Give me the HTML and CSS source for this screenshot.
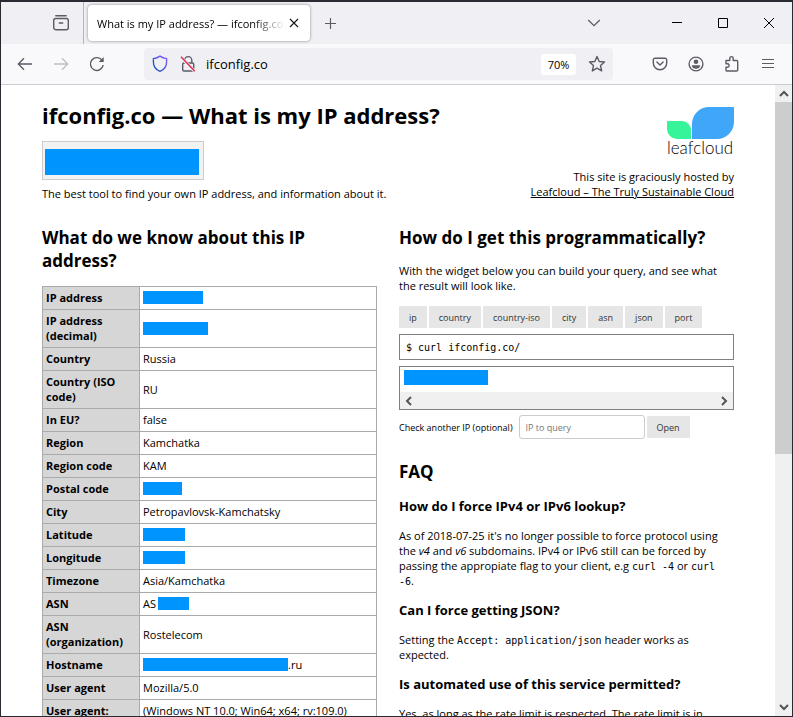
FILE: index.html
```html
<!DOCTYPE html>
<html lang="en">
<head>
<meta charset="utf-8">
<title>What is my IP address? — ifconfig.co</title>
<link rel="stylesheet" href="styles.css">
</head>
<body>
<div class="window">
  <header class="tabbar">
    <button class="icon-btn view-btn" aria-label="Firefox View"><svg width="18" height="18" viewBox="0 0 18 18" fill="none" stroke="#5b5b66" stroke-width="1.4" stroke-linecap="round"><path d="M3.8 1.7h10.4"/><rect x="1.7" y="4.5" width="14.6" height="11.2" rx="2"/><path d="M7.3 9h3.4"/></svg></button>
    <div class="tab">
      <span class="tab-title">What is my IP address? — ifconfig.co</span>
      <button class="icon-btn tab-close" aria-label="Close tab"><svg width="10" height="10" viewBox="0 0 10 10" stroke="#15141a" stroke-width="1.1"><path d="M1 1l8 8M9 1l-8 8"/></svg></button>
    </div>
    <button class="icon-btn new-tab" aria-label="New tab"><svg width="13" height="13" viewBox="0 0 13 13" stroke="#5b5b66" stroke-width="1.2"><path d="M6.5 1v11M1 6.5h11"/></svg></button>
    <div class="window-controls">
      <button class="icon-btn" aria-label="List all tabs"><svg width="14" height="8" viewBox="0 0 14 8" fill="none" stroke="#5b5b66" stroke-width="1.3"><path d="M1.2 1L7 6.6 12.8 1"/></svg></button>
      <span class="control-gap"></span>
      <button class="icon-btn" aria-label="Minimize"><svg width="10" height="10" viewBox="0 0 10 10" stroke="#000"><path d="M0 4.5h10"/></svg></button>
      <button class="icon-btn" aria-label="Maximize"><svg width="10" height="10" viewBox="0 0 10 10" fill="none" stroke="#000"><path d="M.5.5h9v9h-9z"/></svg></button>
      <button class="icon-btn" aria-label="Close"><svg width="10" height="10" viewBox="0 0 10 10" stroke="#000"><path d="M0 0l10 10M10 0L0 10"/></svg></button>
    </div>
  </header>
  <nav class="toolbar">
    <div class="nav-buttons">
      <button class="icon-btn" aria-label="Back"><svg width="16" height="14" viewBox="0 0 16 14" fill="none" stroke="#5b5b66" stroke-width="1.3"><path d="M15 7H1.5M7 1.3L1.3 7 7 12.7"/></svg></button>
      <button class="icon-btn" aria-label="Forward" disabled><svg width="16" height="14" viewBox="0 0 16 14" fill="none" stroke="#bdbdc2" stroke-width="1.3"><path d="M1 7h13.5M9 1.3L14.700 7 9 12.7"/></svg></button>
      <button class="icon-btn" aria-label="Reload"><svg width="16" height="16" viewBox="0 0 16 16" fill="none" stroke="#5b5b66" stroke-width="1.4"><path d="M13.3 4.600A6.400 6.400 0 1 0 14.200 9"/><path d="M14.700 1v5h-5z" fill="#5b5b66" stroke="none"/></svg></button>
    </div>
    <div class="urlbar">
      <svg width="16" height="18" viewBox="0 0 16 18" fill="none" stroke="url(#shield)" stroke-width="1.4"><defs><linearGradient id="shield" x1="1" y1="0" x2="0" y2="1"><stop offset="0" stop-color="#9059ff"/><stop offset="1" stop-color="#0250bb"/></linearGradient></defs><path d="M8 1.2C6.100 2.500 3.800 3.300 1.400 3.600v3.500c0 4.300 2.300 7.700 6.600 9.300 4.300-1.600 6.600-5 6.600-9.300V3.600C12.200 3.300 9.900 2.500 8 1.200z"/></svg>
      <svg width="16" height="18" viewBox="0 0 16 18" fill="none" stroke="#5b5b66" stroke-width="1.4"><path d="M4.600 8V5.200a3.600 3.600 0 0 1 7.200 0V8"/><rect x="2.700" y="8" width="11" height="8" rx="1.200"/><path d="M.8 2l13.500 14" stroke="#f0f0f4" stroke-width="3.200"/><path d="M1 1.800l13.800 14.400" stroke="#e22850" stroke-width="1.400"/></svg>
      <input class="url" aria-label="Address" value="ifconfig.co">
      <button class="zoom-level">70%</button>
      <button class="icon-btn" aria-label="Bookmark this page"><svg width="18" height="18" viewBox="0 0 18 18" fill="none" stroke="#5b5b66" stroke-width="1.4" stroke-linejoin="round"><path d="M9 1.500l2.200 5 5.300.5-4 3.600 1.200 5.300L9 13.100l-4.700 2.800 1.200-5.300-4-3.600 5.300-.5z"/></svg></button>
    </div>
    <div class="tool-buttons">
      <button class="icon-btn" aria-label="Save to Pocket"><svg width="16" height="14" viewBox="0 0 16 14" fill="none" stroke="#5b5b66" stroke-width="1.400" stroke-linecap="round" stroke-linejoin="round"><path d="M3 1.200h10a1.700 1.700 0 0 1 1.700 1.700V6a6.700 6.700 0 0 1-13.400 0V2.900A1.700 1.700 0 0 1 3 1.200z"/><path d="M4.900 5L8 8l3.100-3"/></svg></button>
      <button class="icon-btn" aria-label="Account"><svg width="16" height="16" viewBox="0 0 16 16" fill="none" stroke="#5b5b66" stroke-width="1.400"><circle cx="8" cy="8" r="6.900"/><circle cx="8" cy="5.800" r="2.300" fill="#5b5b66" stroke="none"/><path d="M3.800 9.300h8.400c0 2-1.700 3.400-4.200 3.400S3.800 11.300 3.800 9.300z" fill="#5b5b66" stroke="none"/></svg></button>
      <button class="icon-btn" aria-label="Extensions"><svg width="16" height="18" viewBox="0 0 16 18" fill="none" stroke="#5b5b66" stroke-width="1.400" stroke-linejoin="round"><path d="M2 5.500h3.800V3.300a1.700 1.700 0 0 1 3.400 0v2.200h3.500a1 1 0 0 1 1 1V15a1 1 0 0 1-1 1H3a1 1 0 0 1-1-1v-2.800h1.400a1.700 1.700 0 0 0 0-3.500H2z"/></svg></button>
      <button class="icon-btn" aria-label="Menu"><svg width="12" height="12" viewBox="0 0 12 12" stroke="#5b5b66" stroke-width="1.200"><path d="M0 1.500h12M0 5.500h12M0 9.500h12"/></svg></button>
    </div>
  </nav>
  <div class="viewport">
    <main class="page">
      <section class="intro">
        <div>
          <h1>ifconfig.co — What is my IP address?</h1>
          <div class="ip-box"><span class="mask mask-ip"></span></div>
          <p>The best tool to find your own IP address, and information about it.</p>
        </div>
        <div class="sponsor">
          <svg class="logo" width="67" height="50" viewBox="0 0 67 50" role="img" aria-label="leafcloud"><path d="M0 14h15a9 9 0 0 1 9 9v9H10A10 10 0 0 1 0 22z" fill="#35f49a"/><path d="M25 32V17A17 17 0 0 1 42 0h25v15a17 17 0 0 1-17 17z" fill="#40a6f8"/><text x="0" y="47" class="wordmark">leafcloud</text></svg>
          <p>This site is graciously hosted by<br><a href="#leafcloud">Leafcloud – The Truly Sustainable Cloud</a></p>
        </div>
      </section>
      <div class="columns">
        <section>
          <h2>What do we know about this IP address?</h2>
          <table>
            <tr><th scope="row">IP address</th><td><span class="mask w60"></span></td></tr>
            <tr><th scope="row">IP address (decimal)</th><td><span class="mask w65"></span></td></tr>
            <tr><th scope="row">Country</th><td>Russia</td></tr>
            <tr><th scope="row">Country (ISO code)</th><td>RU</td></tr>
            <tr><th scope="row">In EU?</th><td>false</td></tr>
            <tr><th scope="row">Region</th><td>Kamchatka</td></tr>
            <tr><th scope="row">Region code</th><td>KAM</td></tr>
            <tr><th scope="row">Postal code</th><td><span class="mask w39"></span></td></tr>
            <tr><th scope="row">City</th><td>Petropavlovsk-Kamchatsky</td></tr>
            <tr><th scope="row">Latitude</th><td><span class="mask w42"></span></td></tr>
            <tr><th scope="row">Longitude</th><td><span class="mask w42"></span></td></tr>
            <tr><th scope="row">Timezone</th><td>Asia/Kamchatka</td></tr>
            <tr><th scope="row">ASN</th><td>AS<span class="mask w31"></span></td></tr>
            <tr><th scope="row">ASN (organization)</th><td>Rostelecom</td></tr>
            <tr><th scope="row">Hostname</th><td><span class="mask w145"></span>.ru</td></tr>
            <tr><th scope="row">User agent</th><td>Mozilla/5.0</td></tr>
            <tr><th scope="row">User agent:</th><td>(Windows NT 10.0; Win64; x64; rv:109.0)</td></tr>
          </table>
        </section>
        <section>
          <h2>How do I get this programmatically?</h2>
          <p>With the widget below you can build your query, and see what the result will look like.</p>
          <div class="widget">
            <div class="choices">
              <button class="btn">ip</button><button class="btn">country</button><button class="btn">country-iso</button><button class="btn">city</button><button class="btn">asn</button><button class="btn">json</button><button class="btn">port</button>
            </div>
            <pre class="command">$ curl ifconfig.co/</pre>
            <div class="output">
              <div class="result"><span class="mask mask-result"></span></div>
              <div class="hscroll">
                <svg width="7" height="10" viewBox="0 0 7 10" fill="none" stroke="#555" stroke-width="2"><path d="M6 1L2 5l4 4"/></svg>
                <svg width="7" height="10" viewBox="0 0 7 10" fill="none" stroke="#555" stroke-width="2"><path d="M1 1l4 4-4 4"/></svg>
              </div>
            </div>
            <form class="query">
              <label for="ip">Check another IP (optional)</label>
              <input id="ip" type="text" placeholder="IP to query">
              <button class="btn open" type="button">Open</button>
            </form>
          </div>
          <h2>FAQ</h2>
          <h3>How do I force IPv4 or IPv6 lookup?</h3>
          <p>As of 2018-07-25 it's no longer possible to force protocol using the <em>v4</em> and <em>v6</em> subdomains. IPv4 or IPv6 still can be forced by passing the appropiate flag to your client, e.g <code>curl -4</code> or <code>curl -6</code>.</p>
          <h3>Can I force getting JSON?</h3>
          <p>Setting the <code>Accept: application/json</code> header works as expected.</p>
          <h3>Is automated use of this service permitted?</h3>
          <p>Yes, as long as the rate limit is respected. The rate limit is in</p>
        </section>
      </div>
    </main>
    <div class="vscroll">
      <div class="arrow"><svg width="10" height="7" viewBox="0 0 10 7" fill="none" stroke="#555" stroke-width="2"><path d="M1 6l4-4 4 4"/></svg></div>
      <div class="track"><div class="thumb"></div></div>
      <div class="arrow"><svg width="10" height="7" viewBox="0 0 10 7" fill="none" stroke="#555" stroke-width="2"><path d="M1 1l4 4 4-4"/></svg></div>
    </div>
  </div>
</div>
</body>
</html>
```
FILE: styles.css
```css
* { box-sizing: border-box; }
body { margin: 0; font: 11px/15px "Open Sans", sans-serif; color: #000; }
button, input { font: inherit; color: inherit; border: 0; margin: 0; padding: 0; background: none; }
svg { display: block; flex: none; }

.window { display: flex; flex-direction: column; height: 100vh; border: 1px solid #2b2a33; border-top-width: 2px; overflow: hidden; background: #fff; }
.icon-btn { display: flex; align-items: center; justify-content: center; flex: none; }

/* Tab strip */
.tabbar { display: flex; align-items: center; flex: none; height: 42px; background: #f0f0f4; }
.view-btn { width: 83px; height: 42px; padding-left: 37px; border-right: 1px solid #b4b4ba; }
.tab { display: flex; align-items: center; width: 222px; height: 36px; margin-left: 4px; padding: 0 11px 0 9px; border-radius: 4px; background: #fff; box-shadow: 0 0 3px rgba(0, 0, 0, .45); }
.tab-title { flex: 1; min-width: 0; overflow: hidden; white-space: nowrap; mask-image: linear-gradient(to left, transparent, #000 32px); }
.tab-close { margin-left: 4px; }
.new-tab { margin-left: 14px; }
.window-controls { display: flex; margin-left: auto; }
.window-controls .icon-btn { width: 46px; height: 40px; }
.control-gap { width: 37px; }

/* Navigation toolbar */
.toolbar { display: flex; align-items: center; flex: none; height: 41px; background: #f9f9fb; border-bottom: 1px solid #ccccd1; }
.nav-buttons { display: flex; width: 143px; padding-left: 6px; }
.nav-buttons .icon-btn { width: 36px; height: 32px; }
.urlbar { display: flex; align-items: center; gap: 12px; flex: 1; height: 32px; padding: 0 7px 0 8px; border-radius: 4px; background: #f0f0f4; }
.url { flex: 1; min-width: 0; font-size: 13px; margin-left: -2px; }
.zoom-level { width: 35px; height: 21px; border-radius: 3px; background: #fff; }
.tool-buttons { display: flex; padding-left: 29px; padding-right: 6px; }
.tool-buttons .icon-btn { width: 36px; height: 32px; }

/* Page and scrollbar */
.viewport { display: flex; flex: 1; min-height: 0; }
.page { flex: 1; min-width: 0; padding: 0 41px; overflow: hidden; }
.vscroll { display: flex; flex-direction: column; flex: none; width: 17px; background: #f0f0f0; }
.arrow { display: flex; align-items: center; justify-content: center; height: 17px; }
.track { flex: 1; }
.thumb { height: 59%; background: #cdcdcd; }

h1, h2, h3, p { margin: 0; }
h1 { font-size: 22px; line-height: 30px; }
h2 { font-size: 17px; line-height: 23px; margin-bottom: 14px; }
h3 { font-size: 13px; line-height: 18px; margin-bottom: 13px; }
p { margin-bottom: 13px; }
a { color: inherit; }
code, pre { font: 10px/15px "DejaVu Sans Mono", monospace; }
code { line-height: 10px; }

.intro { display: flex; justify-content: space-between; padding-top: 15px; height: 141px; }
.ip-box { width: 162px; height: 39px; margin: 11px 0 6px; padding: 7px 2px; border: 1px solid #ccc; background: #f2f2f2; }
.sponsor { display: flex; flex-direction: column; align-items: flex-end; padding-top: 7px; text-align: right; }
.logo { margin-bottom: 12px; }
.wordmark { font: 300 17px "Lato", sans-serif; }
.columns { display: grid; grid-template-columns: 1fr 1fr; gap: 22px; }

.mask { display: inline-block; height: 13px; vertical-align: top; margin-top: 1px; background: #0094ff; }
.mask-ip { display: block; width: 154px; height: 26px; margin-top: 0; }
.mask-result { display: block; width: 84px; height: 15px; margin-top: 0; }
.w60 { width: 60px; }
.w65 { width: 65px; }
.w39 { width: 39px; }
.w42 { width: 42px; }
.w31 { width: 31px; margin-left: 2px; }
.w145 { width: 145px; }

/* Address details */
table { width: 100%; border-collapse: collapse; table-layout: fixed; }
th, td { padding: 3px 3px 4px; border: 1px solid #aaa; text-align: left; vertical-align: middle; }
th { width: 97px; background: #d6d6d6; }
td { white-space: nowrap; }

/* Query widget */
.widget { margin-bottom: 21px; font-size: 10px; }
.choices { display: flex; gap: 2px; }
.btn { height: 22px; padding: 0 10px; border-radius: 1px; background: #e6e6e6; color: #333; font-size: 9px; }
.command { height: 26px; margin: 6px 0; padding: 5px 6px; border: 1px solid #808080; }
.output { border: 1px solid #808080; }
.result { padding: 3px 4px 7px; }
.hscroll { display: flex; justify-content: space-between; align-items: center; height: 17px; padding: 0 5px; background: #f0f0f0; }
.query { display: flex; align-items: center; gap: 2px; margin-top: 5px; }
.query label { margin-right: 4px; font-size: 9px; }
.query input { width: 126px; height: 24px; padding: 0 6px; border: 1px solid #ccc; border-radius: 3px; font-size: 9px; }
.query input::placeholder { color: #757575; }
```
